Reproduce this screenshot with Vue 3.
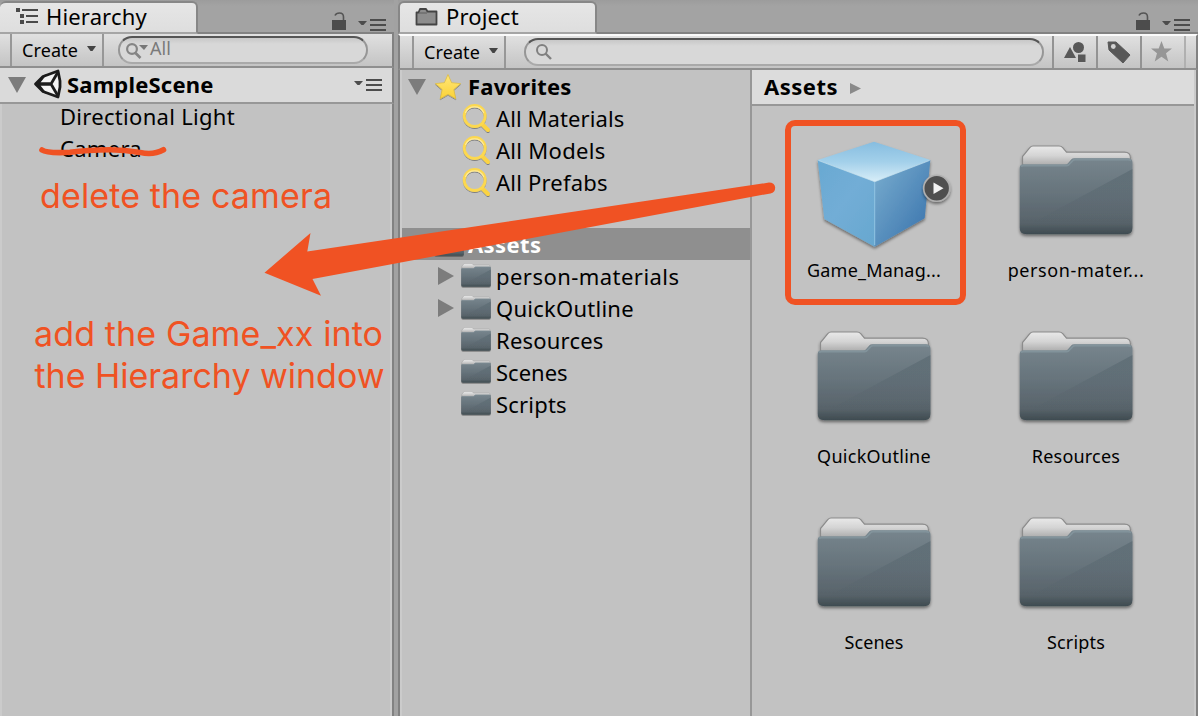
<script setup>
const favorites = [
  { name: 'All Materials', track: 0.1 },
  { name: 'All Models', track: 0.3 },
  { name: 'All Prefabs', track: 0.2 },
]
const folders = [
  { name: 'person-materials', open: true, track: 0.46 },
  { name: 'QuickOutline', open: true, track: 0.25 },
  { name: 'Resources', track: 0.2 },
  { name: 'Scenes', track: 0 },
  { name: 'Scripts', track: 0.2 },
]
const assets = [
  { name: 'Game_Manag...', prefab: true, track: 0.2 },
  { name: 'person-mater...', track: 0.6 },
  { name: 'QuickOutline', track: 0.3 },
  { name: 'Resources', track: 0.2 },
  { name: 'Scenes', track: 0.1 },
  { name: 'Scripts', track: 0.2 },
]
const spacing = (item) => ({ letterSpacing: item.track + 'px' })
</script>

<template>
  <div class="window">
    <svg class="defs" width="0" height="0">
      <defs>
        <linearGradient id="paper" x1="0" y1="0" x2="0" y2="1">
          <stop offset="0" stop-color="#e9e9e9" /><stop offset=".3" stop-color="#d4d4d4" /><stop offset=".62" stop-color="#a9a9a9" />
        </linearGradient>
        <linearGradient id="slate" x1="0" y1="0" x2="0" y2="1">
          <stop offset="0" stop-color="#77858d" /><stop offset=".5" stop-color="#65727a" />
          <stop offset=".85" stop-color="#58636a" /><stop offset="1" stop-color="#3f4b50" />
        </linearGradient>
        <linearGradient id="shade" x1="0" y1="0" x2="0" y2="1">
          <stop offset="0" stop-color="#3c4a54" stop-opacity=".3" /><stop offset=".7" stop-color="#4a5963" stop-opacity=".1" />
          <stop offset="1" stop-color="#4a5963" stop-opacity="0" />
        </linearGradient>
        <linearGradient id="gold" x1="0" y1="0" x2="0" y2="1">
          <stop offset="0" stop-color="#ffe679" /><stop offset="1" stop-color="#fbd236" />
        </linearGradient>
        <linearGradient id="cubeTop" x1="0" y1="0" x2="0" y2="1">
          <stop offset="0" stop-color="#86bde0" /><stop offset=".5" stop-color="#a3d0ea" /><stop offset="1" stop-color="#d8eef8" />
        </linearGradient>
        <linearGradient id="cubeLeft" x1="0" y1="0" x2=".9" y2="1">
          <stop offset="0" stop-color="#69a9d2" /><stop offset=".5" stop-color="#72add6" /><stop offset="1" stop-color="#68a8d0" />
        </linearGradient>
        <linearGradient id="cubeRight" x1=".1" y1=".2" x2=".8" y2=".9">
          <stop offset="0" stop-color="#70a5ca" /><stop offset="1" stop-color="#4079b0" />
        </linearGradient>
        <filter id="soft" x="-10%" y="-10%" width="120%" height="130%"><feDropShadow dx="0" dy="2" stdDeviation="1.4" flood-opacity=".45" /></filter>
        <filter id="tiny" x="-10%" y="-10%" width="120%" height="130%"><feDropShadow dx="0" dy="1" stdDeviation=".6" flood-opacity=".35" /></filter>
        <symbol id="folder" viewBox="7 19 114 90">
          <path d="M10.500 50V30.500l7.500-9q1-1.500 3-1.500h26q2.500 0 3.500 1.500l4 4.700h58q6 0 6 6v20z" fill="url(#paper)" stroke="#8c8c8c" stroke-width="1.200" />
          <path d="M7.700 42q0-3.500 3.500-3.500h42q2 0 3-1.500l3-3.500q1-1.200 3-1.200h54q4.300 0 4.300 4.500v65q0 6.500-6.500 6.500h-99.500q-6.800 0-6.800-6.500z" fill="url(#slate)" />
          <path d="M9 40.500q.5-1 2.500-1h43q2 0 3-1.500l3-3.200q1-1.300 3-1.300h52q2.500 0 3.500 1.300" fill="none" stroke="#82939b" stroke-width="1.800" />
          <path d="M120.500 43L20 97v5h100.500z" fill="url(#shade)" />
        </symbol>
        <symbol id="menu" viewBox="0 0 28 14">
          <path d="M0 4h9L5.500 8h-2z" /><path d="M12 2h16v2H12zM12 7h16v2H12zM12 12h16v2H12z" />
        </symbol>
        <symbol id="lock" viewBox="0 0 14 18">
          <path d="M0 8h14v10H0z" /><path d="M3 3.500Q4 1 7.500 1q4 0 4 4v3" fill="none" stroke="#555" stroke-width="1.600" />
        </symbol>
      </defs>
    </svg>

    <section class="panel left">
      <div class="tabbar">
        <div class="tab hier">
          <svg width="22" height="16" viewBox="0 0 22 16" fill="#4a4a4a">
            <path d="M0 0h4v4H0zM6 1h16v2H6zM4 6h4v4H4zM10 7h12v2H10zM4 12h4v4H4zM10 13h12v2H10z" />
          </svg>
          <span class="tab-title">Hierarchy</span>
        </div>
        <svg class="lock" width="14" height="18"><use href="#lock" /></svg>
        <svg class="menu" width="28" height="14"><use href="#menu" /></svg>
      </div>
      <div class="toolbar">
        <div class="create"><span>Create</span><svg width="9" height="6"><path d="M0 0h9L5.500 5h-2z" /></svg></div>
        <div class="search">
          <svg width="24" height="18" viewBox="0 0 24 18" fill="none" stroke="#858585">
            <circle cx="6" cy="8" r="4.900" stroke-width="2.200" /><path d="M9.500 12l5 5" stroke-width="2.600" /><path d="M13 4h9l-4 5z" fill="#777" stroke="none" />
          </svg>
          <span>All</span>
        </div>
      </div>
      <div class="scene">
        <svg class="down" width="18" height="16"><path d="M0 0h18L9 16z" /></svg>
        <svg class="unity" width="28" height="30" viewBox="0 0 28 30">
          <path d="M1.500 15L9 7.500 24 2l2 10v6l-2 10L9 22.500z" fill="#f4f4f4" stroke="#1c1c1c" stroke-width="2.800" stroke-linejoin="round" />
          <path d="M1 15L9 6.500 13 5 6.500 13.500h10v3h-10L13 25l-4-1.500z" fill="#1c1c1c" />
          <path d="M6 15h11M17 15L24 3M17 15l7 12" fill="none" stroke="#1c1c1c" stroke-width="2.800" />
        </svg>
        <b>SampleScene</b>
        <svg class="menu" width="28" height="14"><use href="#menu" /></svg>
      </div>
      <div class="objects">
        <div>Directional Light</div>
        <div>Camera</div>
      </div>
    </section>

    <section class="panel right">
      <div class="tabbar">
        <div class="tab proj">
          <svg width="23" height="19" viewBox="0 0 23 19">
            <path d="M1.500 5.500h2L5 2h6l1.500 2.500h9v13h-20z" fill="#8d8d8d" stroke="#444" stroke-width="1.800" stroke-linejoin="round" />
            <path d="M4 6h8" stroke="#666" stroke-width="1.200" />
          </svg>
          <span class="tab-title">Project</span>
        </div>
        <svg class="lock" width="14" height="18"><use href="#lock" /></svg>
        <svg class="menu" width="28" height="14"><use href="#menu" /></svg>
      </div>
      <div class="toolbar">
        <div class="create"><span>Create</span><svg width="9" height="6"><path d="M0 0h9L5.500 5h-2z" /></svg></div>
        <div class="search">
          <svg width="18" height="18" viewBox="0 0 18 18" fill="none" stroke="#808080">
            <circle cx="7" cy="7" r="5" stroke-width="2" /><path d="M10.500 10.500l5.500 5.500" stroke-width="2.400" />
          </svg>
        </div>
        <div class="tool">
          <svg width="22" height="21" viewBox="0 0 22 21" fill="#585858"><path d="M6 5l6 11H0z" /><circle cx="14.500" cy="5.500" r="5.500" /><path d="M13.500 12h8.500v8.500h-8.500z" stroke="#cdcdcd" /></svg>
        </div>
        <div class="tool">
          <svg width="22" height="22" viewBox="0 0 22 22"><path d="M0 1h8l14 13-7 8L1 9z" fill="#585858" stroke="#585858" stroke-linejoin="round" /><circle cx="5.300" cy="5.500" r="2.400" fill="#d2d2d2" /></svg>
        </div>
        <div class="tool fav">
          <svg width="21" height="21" viewBox="0 0 21 21"><path d="M10.500 0l2.800 7.500H21l-6 4.700 2.300 8.300-6.800-4.700-6.800 4.700L6 12.200 0 7.500h7.700z" fill="#969696" /></svg>
        </div>
        <div class="tool end"></div>
      </div>
      <div class="content">
        <div class="tree">
          <div class="row top">
            <svg class="down" width="18" height="16"><path d="M0 0h18L9 16z" /></svg>
            <svg class="star" width="28" height="28" viewBox="0 0 28 28">
              <path d="M14 1.500l3.600 8.200 9 .9-6.800 6 2 9.200L14 21.300l-7.800 4.500 2-9.200-6.800-6 9-.9z" fill="url(#gold)" stroke="#e0bb3c" stroke-width=".7" stroke-linejoin="round" filter="url(#tiny)" />
            </svg>
            <b>Favorites</b>
          </div>
          <div v-for="f in favorites" :key="f.name" class="row child">
            <svg class="glass" width="30" height="30" viewBox="0 0 30 30" fill="none" stroke-linecap="round">
              <g filter="url(#tiny)">
                <path d="M21.500 21.500l5.500 5.500" stroke="#fbd342" stroke-width="4" />
                <circle cx="13.700" cy="13" r="10.500" stroke="#fcd84f" stroke-width="2.800" />
                <path d="M4.600 9.500a10 10 0 0 1 18 0" stroke="#ffeb9a" stroke-width="1.200" />
              </g>
            </svg>
            <span :style="spacing(f)">{{ f.name }}</span>
          </div>
          <div class="row selected">
            <svg class="folder-s" width="30" height="24"><use href="#folder" filter="url(#tiny)" /></svg>
            <b>Assets</b>
          </div>
          <div v-for="f in folders" :key="f.name" class="row sub">
            <div class="twist"><svg v-if="f.open" width="16" height="18"><path d="M0 0v18L16 9z" /></svg></div>
            <svg class="folder-s" width="30" height="25"><use href="#folder" width="30" height="24" filter="url(#tiny)" /></svg>
            <span :style="spacing(f)">{{ f.name }}</span>
          </div>
        </div>
        <div class="browser">
          <div class="crumb"><b>Assets</b><svg width="11" height="11"><path d="M0 0v11l11-5.500z" /></svg></div>
          <div class="grid">
            <div v-for="a in assets" :key="a.name" class="cell">
              <svg v-if="a.prefab" class="icon" width="128" height="128" viewBox="0 0 128 128">
                <g filter="url(#soft)">
                  <path d="M7.700 34L64.700 55.700v65L14.300 93z" fill="url(#cubeLeft)" />
                  <path d="M120.300 34L64.700 55.700v65l50-28.400z" fill="url(#cubeRight)" />
                  <path d="M64 15.700L7.700 34 64.700 55.700 120.300 34z" fill="url(#cubeTop)" />
                </g>
                <path d="M8.500 34.500L64.700 55.700 119.500 34.500" fill="none" stroke="#c5e4f4" stroke-width="1" opacity=".7" />
                <path d="M64.700 56v63" stroke="#8fc5e6" stroke-width="1" />
                <g filter="url(#soft)"><circle cx="126.700" cy="62.300" r="13" fill="#505050" stroke="#b0b0b0" stroke-width="1.600" /></g>
                <path d="M123.500 56.500v11.500l10-5.700z" fill="#f2f2f2" />
              </svg>
              <svg v-else class="icon" width="128" height="128" viewBox="0 0 128 128">
                <use href="#folder" x="7" y="19" width="114" height="90" filter="url(#soft)" />
              </svg>
              <span :style="spacing(a)">{{ a.name }}</span>
            </div>
          </div>
        </div>
      </div>
    </section>

    <svg class="notes" width="1198" height="716" viewBox="0 0 1198 716">
      <g fill="#f05223">
        <path d="M264.500 272.700L310.500 233l-3.200 18.500L769 182.600q5.500 0 6.200 5 0 5-4.700 5.800L312.500 279l8.500 16.800z" />
        <text x="40" y="207.500" textLength="292">delete the camera</text>
        <text x="34" y="345.500" textLength="349">add the Game_xx into</text>
        <text x="34.500" y="387.700" textLength="350">the Hierarchy window</text>
      </g>
      <path d="M42 150q5 3.500 28 2.300 18-2.300 40-2.500 15 0 30 2.600 13 3.200 23.500-2.600" fill="none" stroke="#f05223" stroke-width="5.600" stroke-linecap="round" />
      <rect x="788" y="123" width="175" height="179" rx="7" fill="none" stroke="#f05223" stroke-width="6" />
    </svg>
  </div>
</template>

<style>
body { overflow: hidden; }
</style>

<style scoped>
.window { position: relative; display: flex; gap: 4px; width: 1198px; height: 716px; background: #a2a2a2; overflow: hidden; font: 22px/32px "Noto Sans", "Open Sans", sans-serif; color: #000; white-space: nowrap; }
.window * { box-sizing: border-box; }
svg { display: block; flex: none; overflow: visible; }
.defs { position: absolute; }
.panel { display: flex; flex-direction: column; }
.left { width: 394px; }
.right { width: 800px; }
.tabbar { display: flex; height: 34px; padding-top: 1px; border-bottom: 2px solid #828282; background: linear-gradient(#9c9c9c, #a3a3a3 6px); }
.tab { display: flex; align-items: center; height: 33px; padding-bottom: 3px; border: 2px solid #878787; border-bottom: 2px solid #a5a5a5; border-radius: 6px 6px 0 0; background: linear-gradient(#e6e6e6, #dedede); }
.hier { width: 198px; padding-left: 16px; border-left: 0; gap: 8px; }
.proj { width: 199px; padding-left: 15px; gap: 8px; }
.tab-title { letter-spacing: .15px; }
.lock { margin: 11px 0 0 auto; fill: #4c4c4c; }
.menu { fill: #4c4c4c; }
.tabbar .menu { margin: 16px 8px 0 12px; }
.toolbar { display: flex; align-items: center; border-bottom: 2px solid #8f8f8f; background: linear-gradient(#e0e0e0, #c4c4c4); }
.left .toolbar { height: 34px; padding-left: 10px; border-right: 2px solid #828282; }
.right .toolbar { height: 36px; padding-left: 12px; border-left: 2px solid #828282; border-top: 2px solid #fafafa; border-right: 2px solid #828282; }
.create { display: flex; align-items: center; justify-content: space-between; width: 94px; height: 100%; padding: 0 6px 0 10px; border: solid #979797; border-width: 0 2px; font-size: 18px; letter-spacing: .1px; fill: #444; }
.create svg { margin-top: -3px; }
.search { display: flex; align-items: center; height: 28px; border: 2px solid #969696; border-top-color: #555; border-bottom-color: #a9a9a9; border-radius: 14px; background: linear-gradient(#c8c8c8, #d8d8d8 6px); font-size: 18px; color: #7a7a7a; }
.left .search { width: 250px; margin-left: 14px; padding-left: 6px; }
.left .search span { margin: -4px 0 0 0; }
.right .search { width: 520px; margin: 0 8px 0 18px; padding-left: 9px; }
.tool { display: flex; align-items: center; justify-content: center; width: 44px; height: 100%; border-left: 2px solid #939393; }
.fav { padding: 0 4px 2px 0; }
.end { width: 10px; border-color: #b0b0b0; }
.scene { display: flex; align-items: center; height: 36px; padding: 0 10px 0 8px; background: #dadada; border-bottom: 2px solid #979797; border-right: 2px solid #828282; }
.down { fill: #7c7c7c; }
.unity { margin: -3px 0 0 8px; }
.scene b { margin: -2px 0 0 5px; letter-spacing: .2px; }
.scene .menu { margin: -2px 0 0 auto; }
.objects { flex: 1; padding-left: 58px; background: #c2c2c2; border: solid; border-width: 0 2px; border-color: #cbcbcb #828282 #cbcbcb #cbcbcb; box-shadow: inset -2px 0 #cbcbcb; }
.objects > div { position: relative; top: -4px; letter-spacing: .3px; }
.content { display: flex; flex: 1; background: #c2c2c2; border: solid #828282; border-width: 0 2px; }
.tree { width: 350px; border-left: 2px solid #cbcbcb; border-right: 2px solid #979797; }
.tree { width: 352px; }
.row { display: flex; align-items: center; height: 32px; }
.top { height: 33px; padding-left: 6px; }
.star { margin: 0 6px 0 8px; }
.top b { margin-top: -2px; letter-spacing: .2px; }
.child { padding-left: 59px; }
.child span { margin-top: -2px; }
.glass { margin: -2px 5px 0 0; }
.selected { margin-top: 29px; padding-left: 32px; background: #8f8f8f; color: #fff; }
.selected b { margin-left: 4px; letter-spacing: .4px; }
.sub { padding-left: 36px; fill: #7c7c7c; }
.twist { width: 23px; }
.sub .folder-s { margin: -2px 5px 0 0; }
.browser { flex: 1; border-right: 2px solid #cbcbcb; }
.crumb { display: flex; align-items: center; gap: 12px; height: 36px; padding-left: 12px; background: #dcdcdc; border-bottom: 2px solid #979797; fill: #8a8a8a; }
.crumb b { margin-top: -2px; letter-spacing: .5px; }
.crumb svg { margin-top: 2px; }
.grid { display: grid; grid-template-columns: 202px 202px; grid-auto-rows: 186px; padding: 20px 0 0 21px; }
.cell { display: flex; flex-direction: column; align-items: center; font-size: 18px; line-height: 32px; }
.notes { position: absolute; left: 0; top: 0; font: 34px Inter, sans-serif; }
</style>
